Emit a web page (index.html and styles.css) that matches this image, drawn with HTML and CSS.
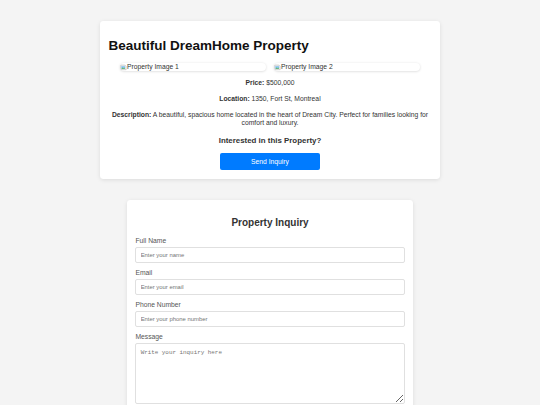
FILE: index.html
```html
<!DOCTYPE html>
<html lang="en">
<head>
<meta charset="utf-8">
<title>Beautiful DreamHome Property</title>
<link rel="stylesheet" href="styles.css">
</head>
<body>
  <section class="card property">
    <h1 class="property-title">Beautiful DreamHome Property</h1>
    <div class="gallery">
      <div class="photo">
        <svg class="photo-icon" viewBox="0 0 16 16" aria-hidden="true">
          <path d="M1.5 2.5h10l3 3v8h-13z" fill="#f2f2f2" stroke="#9a9a9a" stroke-width="1"/>
          <rect x="3" y="5" width="9" height="6" fill="#8ec5f0"/>
          <path d="M3 11l3-3 2 2 2-2 2 3z" fill="#4caf50"/>
        </svg><span>Property Image 1</span>
      </div>
      <div class="photo">
        <svg class="photo-icon" viewBox="0 0 16 16" aria-hidden="true">
          <path d="M1.5 2.5h10l3 3v8h-13z" fill="#f2f2f2" stroke="#9a9a9a" stroke-width="1"/>
          <rect x="3" y="5" width="9" height="6" fill="#8ec5f0"/>
          <path d="M3 11l3-3 2 2 2-2 2 3z" fill="#4caf50"/>
        </svg><span>Property Image 2</span>
      </div>
    </div>
    <p class="detail"><strong>Price:</strong> $500,000</p>
    <p class="detail"><strong>Location:</strong> 1350, Fort St, Montreal</p>
    <p class="detail"><strong>Description:</strong> A beautiful, spacious home located in the heart of Dream City. Perfect for families looking for comfort and luxury.</p>
    <h3 class="cta-title">Interested in this Property?</h3>
    <button class="btn-primary" type="button">Send Inquiry</button>
  </section>

  <section class="card inquiry">
    <h2 class="inquiry-title">Property Inquiry</h2>
    <form class="inquiry-form">
      <label class="field-label" for="name">Full Name</label>
      <input class="field" id="name" type="text" placeholder="Enter your name">
      <label class="field-label" for="email">Email</label>
      <input class="field" id="email" type="email" placeholder="Enter your email">
      <label class="field-label" for="phone">Phone Number</label>
      <input class="field" id="phone" type="tel" placeholder="Enter your phone number">
      <label class="field-label" for="message">Message</label>
      <textarea class="field field-area" id="message" placeholder="Write your inquiry here"></textarea>
    </form>
  </section>
</body>
</html>
```

FILE: styles.css
```css
* {
  box-sizing: border-box;
}

html,
body {
  margin: 0;
  padding: 0;
}

body {
  background: #f4f4f4;
  font-family: "Liberation Sans", Arial, sans-serif;
  font-size: 6.75px;
  line-height: 1.18;
  color: #333;
  padding-top: 21px;
  padding-bottom: 21px;
}

.card {
  background: #fff;
  border-radius: 3.4px;
  box-shadow: 0 1px 4px rgba(0, 0, 0, 0.1);
  padding: 8.45px;
  margin: 0 auto 21px;
}

/* Listing card */
.property {
  width: 340px;
  text-align: center;
}

.property-title {
  text-align: left;
  font-size: 13.5px;
  margin: 8.5px 0 9px;
  color: #111;
}

.gallery {
  display: flex;
  justify-content: center;
}

.photo {
  width: 145.5px;
  margin: 0 4.2px;
  display: flex;
  align-items: center;
  height: 8.6px;
  border-radius: 4px;
  box-shadow: 0 0.6px 2.5px rgba(0, 0, 0, 0.16);
  font-size: 6.75px;
  color: #333;
  text-align: left;
  overflow: hidden;
  white-space: nowrap;
}

.photo-icon {
  width: 6.75px;
  height: 6.75px;
  flex: none;
}

.detail {
  margin: 7.8px 0;
}

.cta-title {
  font-size: 7.9px;
  margin: 9px 0 8.5px;
  color: #333;
}

.btn-primary {
  display: inline-block;
  width: 100px;
  height: 17px;
  padding: 0;
  border: 0;
  border-radius: 2px;
  background: #007bff;
  color: #fff;
  font-family: "Liberation Sans", Arial, sans-serif;
  font-size: 6.75px;
}

/* Inquiry form card */
.inquiry {
  width: 286px;
}

.inquiry-title {
  text-align: center;
  font-size: 10px;
  color: #333;
  margin: 8.5px 0 8.4px;
}

.inquiry-form {
  display: flex;
  flex-direction: column;
}

.field-label {
  display: block;
  color: #555;
  margin-bottom: 2px;
}

.field {
  display: block;
  width: 100%;
  height: 16px;
  padding: 0 4.2px;
  margin-bottom: 6.2px;
  border: 1px solid #e0e0e0;
  border-radius: 2px;
  font-family: "Liberation Sans", Arial, sans-serif;
  font-size: 5.9px;
  color: #333;
  background: #fff;
}

.field::placeholder {
  color: #757575;
}

.field-area {
  height: 61px;
  padding: 4.2px;
  font-family: "Liberation Mono", "Courier New", monospace;
  resize: vertical;
}
```
